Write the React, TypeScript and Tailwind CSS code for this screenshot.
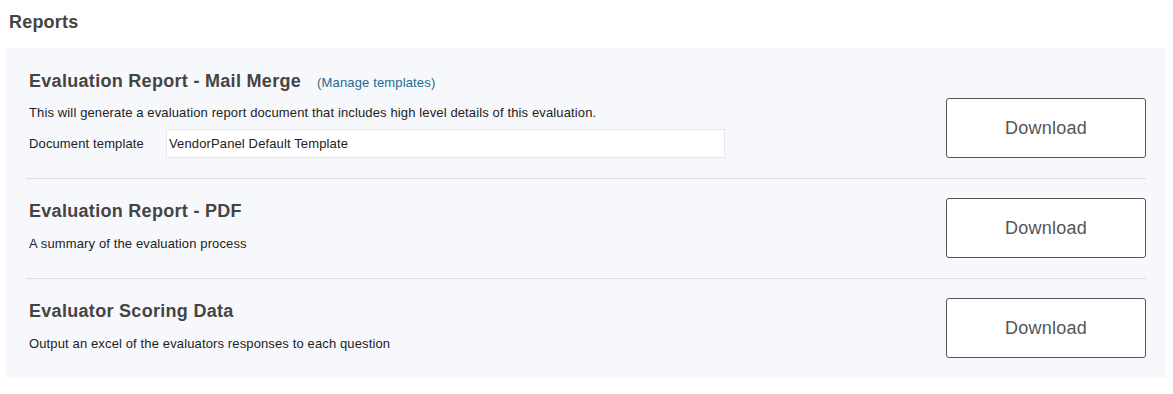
import React from "react";

function DownloadButton() {
  return (
    <button
      type="button"
      className="w-[200px] h-[60px] shrink-0 bg-white border border-[#555555] rounded-[3px] text-[18px] tracking-[0.25px] text-[#555555] leading-none"
    >
      Download
    </button>
  );
}

export default function App() {
  return (
    <div
      className="w-[1173px] h-[394px] bg-white text-[#222222]"
      style={{ fontFamily: '"Liberation Sans", Arial, sans-serif' }}
    >
      <div className="px-[9px] pt-[9px] text-[18px] leading-[27px] font-bold tracking-[0.2px] text-[#444444]">
        Reports
      </div>
      <div className="mt-[12px] ml-[6px] w-[1160px] bg-[#f7f8fc] px-[20px]">
        <div className="flex items-end justify-between pt-[20px] pb-[20px] border-b border-[#dddddd]">
          <div className="pl-[3px]">
            <div className="flex items-baseline">
              <span className="text-[18px] leading-[27px] font-bold tracking-[0.3px] text-[#444444]">
                Evaluation Report - Mail Merge
              </span>
              <a className="ml-[16px] text-[13px] tracking-[0.15px] text-[#1e6a94] cursor-pointer">(Manage templates)</a>
            </div>
            <div className="mt-[9px] text-[13px] leading-[18px] tracking-[0.13px]">
              This will generate a evaluation report document that includes high level details of this evaluation.
            </div>
            <div className="mt-[7px] flex items-center">
              <div className="w-[137px] text-[13px] leading-[18px] tracking-[0.13px]">Document template</div>
              <div className="w-[559px] h-[29px] bg-white border border-[#e8e8e8] flex items-center pl-[2px] text-[13px] tracking-[0.13px]">
                VendorPanel Default Template
              </div>
            </div>
          </div>
          <DownloadButton />
        </div>

        <div className="flex items-start justify-between pt-[19px] pb-[20px] border-b border-[#dddddd]">
          <div className="pl-[3px]">
            <div className="text-[18px] leading-[27px] font-bold tracking-[0.3px] text-[#444444]">Evaluation Report - PDF</div>
            <div className="mt-[10px] text-[13px] leading-[18px] tracking-[0.13px]">A summary of the evaluation process</div>
          </div>
          <DownloadButton />
        </div>

        <div className="flex items-start justify-between pt-[19px] pb-[20px]">
          <div className="pl-[3px]">
            <div className="text-[18px] leading-[27px] font-bold tracking-[0.3px] text-[#444444]">Evaluator Scoring Data</div>
            <div className="mt-[10px] text-[13px] leading-[18px] tracking-[0.13px]">
              Output an excel of the evaluators responses to each question
            </div>
          </div>
          <DownloadButton />
        </div>
      </div>
    </div>
  );
}
